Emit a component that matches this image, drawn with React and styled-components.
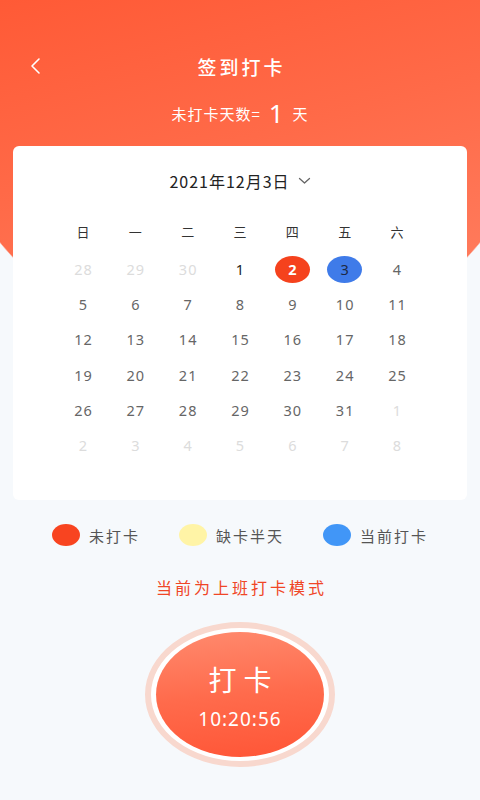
import React from "react";
import styled, { createGlobalStyle } from "styled-components";

const Global = createGlobalStyle`
  html, body { margin: 0; padding: 0; }
  body { font-family: "Noto Sans CJK SC", "Noto Sans", sans-serif; }
`;

const Page = styled.div`
  width: 480px;
  min-height: 800px;
  overflow: hidden;
  background:
    radial-gradient(ellipse 326px 360px at 240px 0, transparent 99.6%, #f6f9fc 100%),
    linear-gradient(165deg, #ff5a36 0%, #ff6a48 40%, #ff8568 100%);
  background-size: 100% 100%, 100% 380px;
  background-repeat: no-repeat;
  background-color: #f6f9fc;
  display: flex;
  flex-direction: column;
  align-items: center;
`;

const Nav = styled.div`
  width: 100%;
  box-sizing: border-box;
  margin-top: 44px;
  height: 44px;
  padding: 0 28px;
  display: grid;
  grid-template-columns: 1fr auto 1fr;
  align-items: center;
`;

const Back = styled.button`
  justify-self: start;
  background: none;
  border: 0;
  padding: 0;
  width: 20px;
  height: 24px;
  display: flex;
  align-items: center;
  cursor: pointer;
`;

const Title = styled.h1`
  margin: 0;
  font-size: 19px;
  font-weight: 500;
  color: #fff;
  letter-spacing: 3px;
  margin-right: -3px;
`;

const Count = styled.div`
  height: 50px;
  display: flex;
  align-items: center;
  color: #fff;
  font-size: 15px;
  letter-spacing: 1px;
`;

const Big = styled.span`
  font-family: "Noto Sans", sans-serif;
  font-size: 26px;
  font-weight: 400;
  margin: 0 9px 0 8px;
  letter-spacing: 0;
`;

const Card = styled.div`
  margin-top: 8px;
  width: 454px;
  height: 354px;
  box-sizing: border-box;
  background: #fff;
  border-radius: 6px;
  padding-top: 23px;
  display: flex;
  flex-direction: column;
  align-items: center;
`;

const DateRow = styled.div`
  height: 24px;
  display: flex;
  align-items: center;
  gap: 8px;
  font-size: 16px;
  color: #222;
  letter-spacing: 1px;
`;

const Grid = styled.div`
  margin-top: 20.5px;
  display: grid;
  grid-template-columns: repeat(7, 52.33px);
  grid-template-rows: 38px;
  grid-auto-rows: 35.2px;
`;

const Week = styled.div`
  height: 35px;
  align-self: start;
  display: flex;
  align-items: center;
  justify-content: center;
  font-size: 13px;
  color: #333;
`;

const Day = styled.div`
  display: flex;
  align-items: center;
  justify-content: center;
`;

const DayNum = styled.span`
  width: 35px;
  height: 27px;
  border-radius: 50%;
  display: flex;
  align-items: center;
  justify-content: center;
  font-family: "Noto Sans", sans-serif;
  font-size: 14.5px;
  letter-spacing: 1px;
  text-indent: 1px;
  background: ${(p) => (p.$mark === "miss" ? "#f5421d" : p.$mark === "now" ? "#3f7be9" : "transparent")};
  color: ${(p) =>
    p.$mark === "miss" ? "#fff" : p.$mark === "now" ? "#1e2a44" : p.$dim ? "#dcdcdc" : p.$dark ? "#222" : "#666"};
  font-weight: ${(p) => (p.$mark === "miss" ? 700 : 400)};
`;

const Legend = styled.div`
  margin-top: 20px;
  height: 30px;
  display: flex;
  align-items: center;
  gap: 39px;
`;

const LegendItem = styled.div`
  display: flex;
  align-items: center;
  gap: 9px;
  font-size: 15px;
  letter-spacing: 2px;
  color: #555;
`;

const Dot = styled.span`
  width: 28px;
  height: 22px;
  border-radius: 50%;
  background: ${(p) => p.$c};
`;

const Mode = styled.div`
  margin-top: 25px;
  height: 24px;
  line-height: 24px;
  font-size: 16px;
  letter-spacing: 3px;
  margin-right: -3px;
  color: #f04626;
`;

const Ring = styled.div`
  margin-top: 23px;
  width: 190px;
  height: 145px;
  box-sizing: border-box;
  border-radius: 50%;
  border: 6px solid #f8d8ce;
  background: #fff;
  padding: 4px 5px;
  display: flex;
`;

const Punch = styled.button`
  flex: 1;
  border: 0;
  border-radius: 50%;
  background: linear-gradient(175deg, #ff8a6e 0%, #ff6b4c 50%, #ff5536 100%);
  color: #fff;
  display: flex;
  flex-direction: column;
  align-items: center;
  padding: 0;
  font-family: inherit;
  cursor: pointer;
`;

const PunchLabel = styled.span`
  margin-top: 28px;
  font-size: 28px;
  line-height: 38px;
  letter-spacing: 7px;
  margin-right: -7px;
`;

const Time = styled.span`
  margin-top: 8px;
  font-family: "Noto Sans", sans-serif;
  font-size: 19px;
  line-height: 26px;
  letter-spacing: 1px;
`;

const weekdays = ["日", "一", "二", "三", "四", "五", "六"];

const days = [
  [28, 1], [29, 1], [30, 1], [1, 0, "dark"], [2, 0, "miss"], [3, 0, "now"], [4],
  [5], [6], [7], [8], [9], [10], [11],
  [12], [13], [14], [15], [16], [17], [18],
  [19], [20], [21], [22], [23], [24], [25],
  [26], [27], [28], [29], [30], [31], [1, 1],
  [2, 1], [3, 1], [4, 1], [5, 1], [6, 1], [7, 1], [8, 1],
];

export default function App() {
  return (
    <>
      <Global />
      <Page>
        <Nav>
          <Back aria-label="返回">
            <svg width="14" height="18" viewBox="0 0 14 18">
              <polyline points="11,2 4,9 11,16" fill="none" stroke="#fff" strokeWidth="1.6" strokeLinecap="round" strokeLinejoin="round" />
            </svg>
          </Back>
          <Title>签到打卡</Title>
          <span />
        </Nav>
        <Count>
          未打卡天数=<Big>1</Big>天
        </Count>
        <Card>
          <DateRow>
            <span>2021年12月3日</span>
            <svg width="13" height="8" viewBox="0 0 13 8">
              <polyline points="1.5,1.5 6.5,6 11.5,1.5" fill="none" stroke="#666" strokeWidth="1.3" strokeLinecap="round" strokeLinejoin="round" />
            </svg>
          </DateRow>
          <Grid>
            {weekdays.map((w) => (
              <Week key={w}>{w}</Week>
            ))}
            {days.map(([n, dim, kind], i) => (
              <Day key={i}>
                <DayNum $dim={!!dim} $dark={kind === "dark"} $mark={kind === "miss" || kind === "now" ? kind : undefined}>
                  {n}
                </DayNum>
              </Day>
            ))}
          </Grid>
        </Card>
        <Legend>
          <LegendItem>
            <Dot $c="#f84420" />
            未打卡
          </LegendItem>
          <LegendItem>
            <Dot $c="#fff4a6" />
            缺卡半天
          </LegendItem>
          <LegendItem>
            <Dot $c="#4196f7" />
            当前打卡
          </LegendItem>
        </Legend>
        <Mode>当前为上班打卡模式</Mode>
        <Ring>
          <Punch>
            <PunchLabel>打卡</PunchLabel>
            <Time>10:20:56</Time>
          </Punch>
        </Ring>
      </Page>
    </>
  );
}
